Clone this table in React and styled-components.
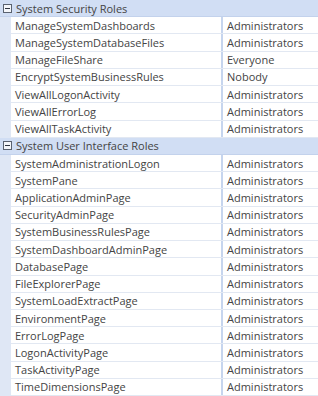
import React from "react";
import styled, { createGlobalStyle } from "styled-components";

const Global = createGlobalStyle`
  html, body { margin: 0; padding: 0; background: #fff; }
  body { font-family: "Open Sans", "Noto Sans", sans-serif; }
`;

const Grid = styled.div`
  width: 318px;
  height: 396px;
  overflow: hidden;
  background: #dfe7f5;
  display: flex;
  flex-direction: column;
`;

const GroupRow = styled.div`
  height: 17.27px;
  box-sizing: border-box;
  display: flex;
  align-items: center;
  background: #d1def4;
  border-bottom: 1px solid #c3d2ec;
  font-size: 11px;
  color: #444;
`;

const Toggle = styled.span`
  width: 7px;
  height: 7px;
  border: 1px solid #5a6270;
  background: #f4f6fa;
  margin: 0 4px 0 3px;
  position: relative;
  flex: none;
  &::after {
    content: "";
    position: absolute;
    left: 1px;
    right: 1px;
    top: 3px;
    height: 1px;
    background: #2e3440;
  }
`;

const Row = styled.div`
  height: 17.27px;
  box-sizing: border-box;
  display: flex;
  margin-left: 11px;
  background: #fff;
  font-size: 11px;
  color: #444;
  border-bottom: 1px solid #e2e8f2;
`;

const NameCell = styled.div`
  width: 206px;
  padding-left: 4px;
  display: flex;
  align-items: center;
  white-space: nowrap;
  border-right: 2px solid #c6d5ee;
`;

const ValueCell = styled.div`
  flex: 1;
  padding-left: 4px;
  display: flex;
  align-items: center;
  white-space: nowrap;
`;

const groups = [
  {
    title: "System Security Roles",
    rows: [
      ["ManageSystemDashboards", "Administrators"],
      ["ManageSystemDatabaseFiles", "Administrators"],
      ["ManageFileShare", "Everyone"],
      ["EncryptSystemBusinessRules", "Nobody"],
      ["ViewAllLogonActivity", "Administrators"],
      ["ViewAllErrorLog", "Administrators"],
      ["ViewAllTaskActivity", "Administrators"],
    ],
  },
  {
    title: "System User Interface Roles",
    rows: [
      ["SystemAdministrationLogon", "Administrators"],
      ["SystemPane", "Administrators"],
      ["ApplicationAdminPage", "Administrators"],
      ["SecurityAdminPage", "Administrators"],
      ["SystemBusinessRulesPage", "Administrators"],
      ["SystemDashboardAdminPage", "Administrators"],
      ["DatabasePage", "Administrators"],
      ["FileExplorerPage", "Administrators"],
      ["SystemLoadExtractPage", "Administrators"],
      ["EnvironmentPage", "Administrators"],
      ["ErrorLogPage", "Administrators"],
      ["LogonActivityPage", "Administrators"],
      ["TaskActivityPage", "Administrators"],
      ["TimeDimensionsPage", "Administrators"],
    ],
  },
];

export default function App() {
  return (
    <>
      <Global />
      <Grid>
        {groups.map((g) => (
          <React.Fragment key={g.title}>
            <GroupRow>
              <Toggle />
              {g.title}
            </GroupRow>
            {g.rows.map(([n, v]) => (
              <Row key={n}>
                <NameCell>{n}</NameCell>
                <ValueCell>{v}</ValueCell>
              </Row>
            ))}
          </React.Fragment>
        ))}
      </Grid>
    </>
  );
}
